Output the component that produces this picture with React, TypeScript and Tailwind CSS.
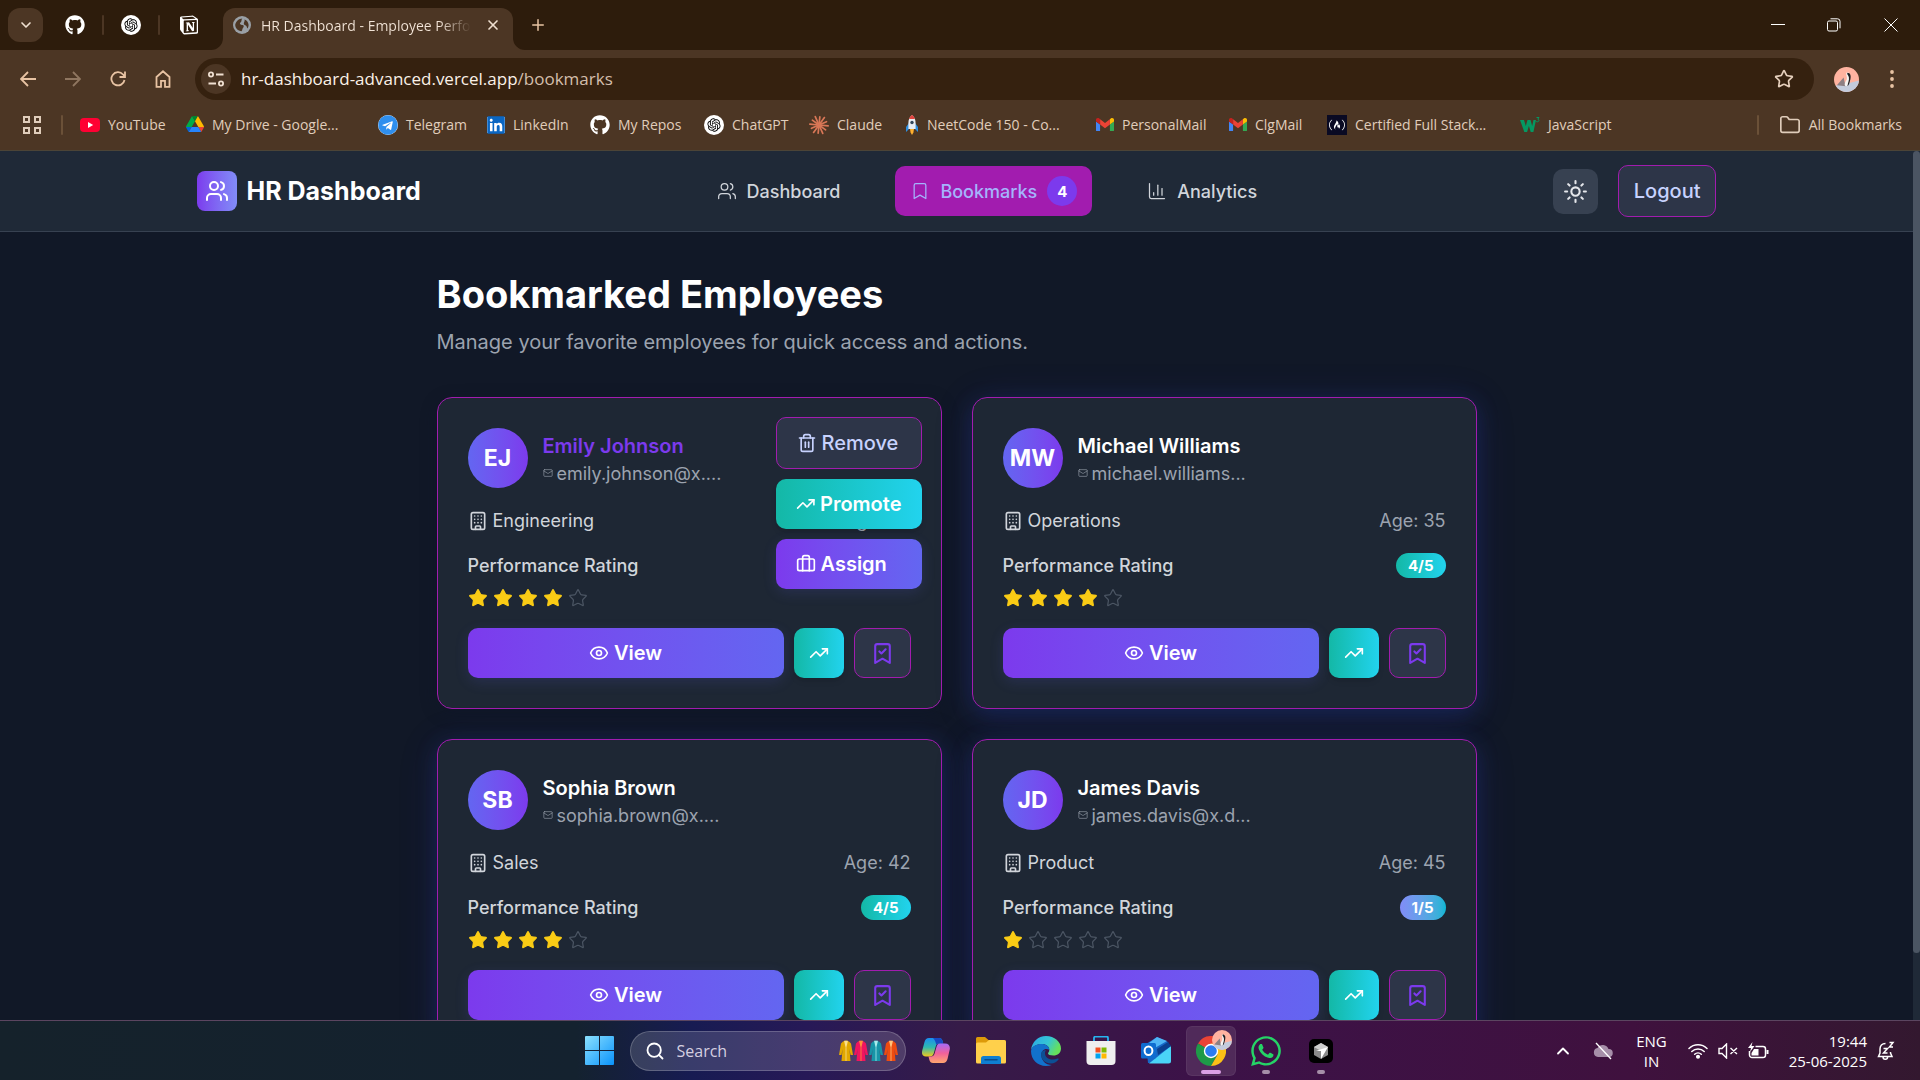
import React from "react";
import {
  Bookmark,
  BookmarkCheck,
  Briefcase,
  Building,
  ChartColumn,
  ChevronDown,
  ChevronUp,
  Eye,
  Folder,
  Mail,
  Plus,
  Search,
  Star,
  Sun,
  Trash2,
  TrendingUp,
  Users,
  X,
} from "lucide-react";
import { FaFreeCodeCamp, FaGithub, FaLinkedin, FaTelegram, FaWhatsapp } from "react-icons/fa";
import { RiNotionFill, RiOpenaiFill } from "react-icons/ri";

/* ---------- small brand drawings ---------- */

const OpenAiBadge = () => (
  <span className="flex size-5 items-center justify-center rounded-full bg-white text-black">
    <RiOpenaiFill className="size-4" />
  </span>
);

const YouTubeIcon = () => (
  <svg viewBox="0 0 20 20" className="size-5">
    <rect x="0" y="3" width="20" height="14" rx="4" fill="#ff0033" />
    <path d="M8 7l5.2 3L8 13z" fill="#fff" />
  </svg>
);

const DriveIcon = () => (
  <svg viewBox="0 0 87.3 78" className="w-[18px]">
    <path d="M6.6 66.85l3.85 6.65c.8 1.4 1.95 2.5 3.3 3.3l13.75-23.8H0c0 1.55.4 3.1 1.2 4.5z" fill="#0066da" />
    <path d="M43.65 25L29.9 1.2c-1.35.8-2.5 1.9-3.3 3.3l-25.4 44A9 9 0 0 0 0 53h27.5z" fill="#00ac47" />
    <path d="M73.55 76.8c1.35-.8 2.5-1.9 3.3-3.3l1.6-2.75L86.1 57.5c.8-1.4 1.2-2.95 1.2-4.5H59.8l5.85 11.5z" fill="#ea4335" />
    <path d="M43.65 25L57.4 1.2C56.05.4 54.5 0 52.9 0H34.4c-1.6 0-3.15.45-4.5 1.2z" fill="#00832d" />
    <path d="M59.8 53H27.5L13.75 76.8c1.35.8 2.9 1.2 4.5 1.2h50.8c1.6 0 3.15-.45 4.5-1.2z" fill="#2684fc" />
    <path d="M73.4 26.5l-12.7-22c-.8-1.4-1.95-2.5-3.3-3.3L43.65 25 59.8 53h27.45c0-1.55-.4-3.1-1.2-4.5z" fill="#ffba00" />
  </svg>
);

const GmailIcon = () => (
  <svg viewBox="52 42 88 66" className="w-[18px]">
    <path fill="#4285f4" d="M58 108h14V74L52 59v43c0 3.32 2.69 6 6 6" />
    <path fill="#34a853" d="M120 108h14c3.32 0 6-2.69 6-6V59l-20 15" />
    <path fill="#fbbc04" d="M120 48v26l20-15v-8c0-7.42-8.47-11.65-14.4-7.2" />
    <path fill="#ea4335" d="M72 74V48l24 18 24-18v26L96 92" />
    <path fill="#c5221f" d="M52 51v8l20 15V48l-5.6-4.2c-5.94-4.45-14.4-.22-14.4 7.2" />
  </svg>
);

const BURST = Array.from({ length: 12 }, (_, i) => i * 30 + 6);

const ClaudeIcon = () => (
  <svg viewBox="-10 -10 20 20" className="size-5">
    {BURST.map((angle, i) => (
      <line
        key={angle}
        x1="0"
        y1="0"
        x2="0"
        y2={i % 2 ? -9.2 : -8.2}
        transform={`rotate(${angle})`}
        stroke="#d97757"
        strokeWidth="1.7"
        strokeLinecap="round"
      />
    ))}
  </svg>
);

const RocketIcon = () => (
  <svg viewBox="0 0 14 20" className="h-5 w-[14px]">
    <path d="M4 8L1 12v5l3-3zM10 8l3 4v5l-3-3z" fill="#2f8fe0" />
    <path d="M7 0c2.6 2 3.6 5 3.6 8v6H3.4V8C3.4 5 4.4 2 7 0z" fill="#e9edf2" />
    <path d="M7 0c1.5 1.1 2.4 2.4 2.9 4H4.1C4.6 2.4 5.5 1.1 7 0z" fill="#e0443e" />
    <circle cx="7" cy="7.5" r="1.7" fill="#33475b" />
    <path d="M5 14h4l-.6 3.5L7 20l-1.4-2.5z" fill="#ffb02e" />
  </svg>
);

const W3Icon = () => (
  <svg viewBox="0 0 20 20" className="size-5">
    <path d="M0 5h4l1.8 6L7.5 5h3l1.7 6L13.5 5H16l-2.6 12h-2.7L8.900 11l-1.800 6H4.300z" fill="#059862" />
    <path d="M16.5 2.5h2.500l-1.200 1.700c1.600.2 1.500 2.600-.4 2.600-.6 0-1.100-.2-1.400-.6" fill="none" stroke="#059862" />
  </svg>
);

const ProfileIcon = ({ className }: { className: string }) => (
  <svg viewBox="0 0 26 26" className={className}>
    <defs>
      <clipPath id="profile-clip">
        <circle cx="13" cy="13" r="13" />
      </clipPath>
    </defs>
    <g clipPath="url(#profile-clip)">
      <rect width="26" height="26" fill="#ffb3a0" />
      <path d="M0 20l6-2 9-1 11-3v12H0z" fill="#c3cbdc" />
      <path d="M3 19l7-8 2 9z" fill="#8d7f83" />
      <path d="M13 6c3-1 4.500 2 3.500 6s-.5 7-4 8c-2.500-1-1-4 .5-6.500S12 8 13 6z" fill="#f7f4f2" />
      <path d="M14 6c3 0 4 3 3 7s-1.500 6-3 7c.5-4 2-6 1.500-9S13 8 14 6z" fill="#1f2023" />
    </g>
  </svg>
);

/* ---------- browser chrome ---------- */

const Divider = () => <span className="h-5 w-0.5 shrink-0 rounded-full bg-[#4c3624]" />;

const TabStrip = () => (
  <div className="flex h-[50px] items-center bg-[#2d1c0c] pl-2 text-[#efdfd0]">
    <button aria-label="Search tabs" className="flex h-[34px] w-[35px] items-center justify-center rounded-xl bg-[#4c3624]">
      <ChevronDown className="size-4" strokeWidth={2.5} />
    </button>
    <div className="ml-[22px] flex items-center gap-[17px]">
      <FaGithub className="size-5 text-white" />
      <Divider />
      <OpenAiBadge />
      <Divider />
      <RiNotionFill className="size-6 text-white" />
    </div>
    <div className="relative ml-[22px] mt-2 flex h-[42px] w-[290px] items-center rounded-t-xl bg-[#4c3624] pb-2 pl-2.5 pr-3">
      <svg viewBox="0 0 12 12" className="absolute bottom-0 -left-3 size-3">
        <path d="M12 0v12H0A12 12 0 0 0 12 0z" fill="#4c3624" />
      </svg>
      <svg viewBox="0 0 12 12" className="absolute bottom-0 -right-3 size-3">
        <path d="M0 0v12h12A12 12 0 0 1 0 0z" fill="#4c3624" />
      </svg>
      <svg viewBox="0 0 18 18" className="size-[18px] shrink-0">
        <circle cx="9" cy="9" r="9" fill="#9aa0a6" />
        <path d="M2.200 8.800C3 5 6 2.600 9.300 2.500 8 4 9 5.500 7.500 6.500S7.800 9 9.500 9s1.500 2 .5 3-.5 2.500-1.500 3.200C5 15 2.200 12.500 2.200 8.800z" fill="#4c3624" />
        <path d="M11.500 3.500c2.300.8 4 3 4.100 5.500 0 1.300-.4 2.500-1 3.500-1-.8-.6-2.500-1.900-3s-2.400-1.500-1.700-3 .8-1.500.5-3z" fill="#4c3624" />
      </svg>
      <span className="ml-2.5 flex-1 overflow-hidden whitespace-nowrap bg-linear-to-r from-[#f3e5d8] from-85% to-transparent bg-clip-text text-[14px] text-transparent">
        HR Dashboard - Employee Performance
      </span>
      <button aria-label="Close tab" className="ml-3.5 shrink-0">
        <X className="size-4" strokeWidth={2.5} />
      </button>
    </div>
    <button aria-label="New tab" className="ml-4 text-[#e8c3a3]">
      <Plus className="size-[18px]" />
    </button>
    <div className="ml-auto flex text-white">
      <button aria-label="Minimise" className="flex w-14 justify-center">
        <svg viewBox="0 0 14 14" className="size-3.5">
          <path d="M0 6.500h14" stroke="currentColor" />
        </svg>
      </button>
      <button aria-label="Restore" className="flex w-14 justify-center">
        <svg viewBox="0 0 14 14" className="size-3.5" fill="none" stroke="currentColor">
          <rect x=".5" y="3" width="10" height="10" rx="1.500" />
          <path d="M3.500 .8h7a2.500 2.500 0 0 1 2.500 2.500v7" />
        </svg>
      </button>
      <button aria-label="Close" className="flex w-[58px] justify-center">
        <svg viewBox="0 0 14 14" className="size-3.5" stroke="currentColor">
          <path d="M.5 .5l13 13M13.500 .5l-13 13" />
        </svg>
      </button>
    </div>
  </div>
);

const Toolbar = () => (
  <div className="flex h-[58px] items-center pl-2 pr-[15px] text-[#e8c3a3]">
    <div className="flex gap-[5px]">
      <button aria-label="Back" className="flex size-10 items-center justify-center">
        <svg viewBox="0 0 16 16" className="size-4" fill="none" stroke="currentColor" strokeWidth="1.8">
          <path d="M16 8H1.500M8 1L1 8l7 7" />
        </svg>
      </button>
      <button aria-label="Forward" className="flex size-10 items-center justify-center text-[#8f7660]">
        <svg viewBox="0 0 16 16" className="size-4" fill="none" stroke="currentColor" strokeWidth="1.8">
          <path d="M0 8h14.500M8 1l7 7-7 7" />
        </svg>
      </button>
      <button aria-label="Reload" className="flex size-10 items-center justify-center">
        <svg viewBox="0 0 16 16" className="size-4" fill="none" stroke="currentColor" strokeWidth="1.8">
          <path d="M14.500 9A6.600 6.600 0 1 1 13 3.500L14.500 5M15 .5V6H9.500" />
        </svg>
      </button>
      <button aria-label="Home" className="flex size-10 items-center justify-center">
        <svg viewBox="0 0 16 18" className="h-[18px] w-4" fill="none" stroke="currentColor" strokeWidth="1.8">
          <path d="M1.500 7L8 1.300 14.500 7v9.800H10v-6H6v6H1.500z" />
        </svg>
      </button>
    </div>
    <div className="ml-3 flex h-[42px] flex-1 items-center rounded-full bg-[#35210f] pl-1.5 pr-5">
      <button aria-label="Site information" className="flex size-[30px] items-center justify-center rounded-full bg-[#4c3624] text-[#f0e0d2]">
        <svg viewBox="0 0 16 16" className="size-4" fill="none" stroke="currentColor" strokeWidth="1.8">
          <circle cx="3" cy="3.500" r="2.100" />
          <path d="M8 3.500h7.500M.5 12.500H8" />
          <circle cx="13" cy="12.500" r="2.100" />
        </svg>
      </button>
      <label className="sr-only" htmlFor="address">
        Address
      </label>
      <div className="relative ml-2.5 flex-1 text-[17px]">
        <span aria-hidden className="pointer-events-none absolute inset-0 whitespace-nowrap text-[#fbf1e8]">
          hr-dashboard-advanced.vercel.app<span className="text-[#d3beab]">/bookmarks</span>
        </span>
        <input
          id="address"
          className="w-full bg-transparent text-transparent outline-none"
          defaultValue="hr-dashboard-advanced.vercel.app/bookmarks"
        />
      </div>
      <Star className="size-5 text-[#e5cfbc]" />
    </div>
    <ProfileIcon className="ml-5 size-[25px]" />
    <button aria-label="Menu" className="ml-5 flex size-[26px] items-center justify-center">
      <svg viewBox="0 0 4 18" className="h-[18px] w-1" fill="currentColor">
        <circle cx="2" cy="2" r="1.900" />
        <circle cx="2" cy="9" r="1.900" />
        <circle cx="2" cy="16" r="1.900" />
      </svg>
    </button>
  </div>
);

const BOOKMARKS: { label: string; icon: React.ReactNode; width: string }[] = [
  { label: "YouTube", icon: <YouTubeIcon />, width: "w-[106px]" },
  { label: "My Drive - Google...", icon: <DriveIcon />, width: "w-[192px]" },
  {
    label: "Telegram",
    icon: (
      <span className="flex size-5 rounded-full bg-white">
        <FaTelegram className="size-5 text-[#2f8fee]" />
      </span>
    ),
    width: "w-[109px]",
  },
  {
    label: "LinkedIn",
    icon: (
      <span className="flex h-4 w-[18px] items-center justify-center bg-white">
        <FaLinkedin className="size-5 shrink-0 text-[#0a66c2]" />
      </span>
    ),
    width: "w-[103px]",
  },
  { label: "My Repos", icon: <FaGithub className="size-5 text-white" />, width: "w-[114px]" },
  { label: "ChatGPT", icon: <OpenAiBadge />, width: "w-[105px]" },
  { label: "Claude", icon: <ClaudeIcon />, width: "w-[96px]" },
  { label: "NeetCode 150 - Co...", icon: <RocketIcon />, width: "w-[191px]" },
  { label: "PersonalMail", icon: <GmailIcon />, width: "w-[133px]" },
  { label: "ClgMail", icon: <GmailIcon />, width: "w-[98px]" },
  {
    label: "Certified Full Stack...",
    icon: (
      <span className="flex size-5 items-center justify-center bg-[#0a0a23] text-white">
        <FaFreeCodeCamp className="size-4" />
      </span>
    ),
    width: "w-[193px]",
  },
  { label: "JavaScript", icon: <W3Icon />, width: "w-[110px]" },
];

const BookmarkBar = () => (
  <div className="flex h-[42px] items-center pb-[9px] pl-[23px] pr-[18px] text-[14px] text-[#e0cdbb]">
    <button aria-label="Apps" className="grid grid-cols-2 gap-1">
      <span className="size-[7px] border-2 border-current" />
      <span className="size-[7px] border-2 border-current" />
      <span className="size-[7px] border-2 border-current" />
      <span className="size-[7px] border-2 border-current" />
    </button>
    <span className="ml-5 mr-[17px] h-5 w-0.5 rounded-full bg-[#6b5138]" />
    {BOOKMARKS.map((item) => (
      <a key={item.label} href="#" className={`flex shrink-0 items-center gap-2 whitespace-nowrap ${item.width}`}>
        {item.icon}
        {item.label}
      </a>
    ))}
    <span className="ml-auto mr-5 h-5 w-0.5 rounded-full bg-[#6b5138]" />
    <button className="flex items-center gap-2 whitespace-nowrap">
      <Folder className="size-[22px]" strokeWidth={1.8} />
      All Bookmarks
    </button>
  </div>
);

/* ---------- HR dashboard ---------- */

const NavBar = () => (
  <header className="border-b border-[#374151] bg-[#1f2937]">
    <div className="mx-auto flex h-20 max-w-[1600px] items-center justify-between px-10">
      <a href="#" className="flex items-center gap-2.5 text-[25px] leading-[40px] font-bold text-white">
        <span className="flex size-10 items-center justify-center rounded-lg bg-linear-to-r from-[#7c3aed] to-[#818cf8]">
          <Users className="size-6" strokeWidth={2} />
        </span>
        <span className="whitespace-nowrap">HR Dashboard</span>
      </a>
      <nav className="flex items-center gap-10 text-[18px] leading-[25px] font-medium text-[#d1d5db]">
        <a href="#" className="flex h-[50px] items-center gap-2.5 rounded-[10px] px-[15px]">
          <Users className="size-5" strokeWidth={1.5} />
          Dashboard
        </a>
        <a href="#" className="flex h-[50px] items-center gap-2.5 rounded-[10px] bg-[#a21caf] px-[15px] text-[#a5b4fc]">
          <Bookmark className="size-5" strokeWidth={1.5} />
          Bookmarks
          <span className="flex size-[30px] items-center justify-center rounded-full bg-[#7c3aed] text-[15px] font-bold text-white">4</span>
        </a>
        <a href="#" className="flex h-[50px] items-center gap-2.5 rounded-[10px] px-[15px]">
          <ChartColumn className="size-5" strokeWidth={1.5} />
          Analytics
        </a>
      </nav>
      <div className="flex items-center gap-5">
        <button aria-label="Toggle theme" className="flex size-[45px] items-center justify-center rounded-[10px] bg-[#374151] text-[#e5e7eb]">
          <Sun className="size-[25px]" strokeWidth={2} />
        </button>
        <button className="flex h-[52px] items-center rounded-[10px] border border-[#a21caf] bg-[#2d3548] px-[15px] text-[20px] font-medium text-[#c7d2fe]">
          Logout
        </button>
      </div>
    </div>
  </header>
);

type Employee = {
  name: string;
  initials: string;
  email: string;
  department: string;
  age: number;
  rating: number;
  active?: boolean;
};

const EMPLOYEES: Employee[] = [
  { name: "Emily Johnson", initials: "EJ", email: "emily.johnson@x....", department: "Engineering", age: 28, rating: 4, active: true },
  { name: "Michael Williams", initials: "MW", email: "michael.williams...", department: "Operations", age: 35, rating: 4 },
  { name: "Sophia Brown", initials: "SB", email: "sophia.brown@x....", department: "Sales", age: 42, rating: 4 },
  { name: "James Davis", initials: "JD", email: "james.davis@x.d...", department: "Product", age: 45, rating: 1 },
];

const QuickActions = () => (
  <div className="absolute right-[19px] top-[19px] flex w-[146px] flex-col gap-2.5 text-[20px] font-semibold text-white">
    <button className="flex h-[52px] items-center gap-[5px] rounded-[10px] border border-[#a21caf] bg-[#2d3548] px-5 font-medium text-[#c7d2fe]">
      <Trash2 className="size-5" />
      Remove
    </button>
    <button className="flex h-[50px] items-center gap-[5px] rounded-[10px] bg-linear-to-r from-[#14b8a6] to-[#22d3ee] px-5 shadow-md">
      <TrendingUp className="size-5" />
      Promote
    </button>
    <button className="flex h-[50px] items-center gap-[5px] rounded-[10px] bg-linear-to-r from-[#7c3aed] to-[#6366f1] px-5 shadow-[0_4px_14px_rgba(99,102,241,0.15)]">
      <Briefcase className="size-5" />
      Assign
    </button>
  </div>
);

const EmployeeCard = ({ employee }: { employee: Employee }) => (
  <article
    className={`relative rounded-[15px] border border-[#a21caf] bg-[#1e2734] p-[30px] ${
      employee.active
        ? "shadow-[0_4px_16px_rgba(15,23,42,0.4)]"
        : "shadow-[0_5px_20px_rgba(30,58,138,0.35),0_5px_40px_rgba(67,56,202,0.15)]"
    }`}
  >
    <div className="flex items-center gap-[15px]">
      <span className="flex size-[60px] items-center justify-center rounded-full bg-linear-to-r from-[#6366f1] to-[#7c3aed] text-[23px] font-bold text-white">
        {employee.initials}
      </span>
      <div>
        <h2 className={`text-[20px] leading-[30px] font-semibold ${employee.active ? "text-[#7c3aed]" : "text-white"}`}>{employee.name}</h2>
        <p className="flex items-center gap-1 text-[18px] leading-[25px] text-[#9ca3af]">
          <Mail className="size-2.5" strokeWidth={1.5} />
          {employee.email}
        </p>
      </div>
    </div>
    <div className="mt-5 flex items-center justify-between text-[18px] leading-[25px]">
      <span className="flex items-center gap-[5px] text-[#d1d5db]">
        <Building className="size-5" />
        {employee.department}
      </span>
      <span className="text-[#9ca3af]">Age: {employee.age}</span>
    </div>
    <div className="mt-5 flex items-center justify-between">
      <span className="text-[18px] leading-[25px] font-medium text-[#d1d5db]">Performance Rating</span>
      <span
        className={`rounded-full bg-linear-to-r px-3 text-[15px] leading-[25px] font-bold text-white ${
          employee.rating > 2 ? "from-[#14b8a6] to-[#22d3ee]" : "from-[#818cf8] to-[#06b6d4]"
        }`}
      >
        {employee.rating}/5
      </span>
    </div>
    <div className="mt-2.5 flex gap-[5px]" role="img" aria-label={`${employee.rating} of 5 stars`}>
      {[1, 2, 3, 4, 5].map((n) => (
        <Star
          key={n}
          className={n <= employee.rating ? "size-5 fill-[#facc15] text-[#facc15]" : "size-5 text-[#4b5563]"}
          strokeWidth={1.5}
        />
      ))}
    </div>
    <div className="mt-5 flex h-[50px] gap-2.5">
      <button className="flex flex-1 items-center justify-center gap-[5px] rounded-[10px] bg-linear-to-r from-[#7c3aed] to-[#6366f1] text-[20px] font-semibold text-white shadow-[0_4px_14px_rgba(99,102,241,0.15)]">
        <Eye className="size-5" />
        View
      </button>
      <button aria-label="Promote" className="flex w-[50px] items-center justify-center rounded-[10px] bg-linear-to-r from-[#14b8a6] to-[#22d3ee] text-white shadow-md">
        <TrendingUp className="size-5" />
      </button>
      <button aria-label="Remove bookmark" className="flex w-[57px] items-center justify-center rounded-[10px] border border-[#a21caf] bg-[#2d3548] text-[#7c3aed]">
        <BookmarkCheck className="size-[25px]" />
      </button>
    </div>
    {employee.active && <QuickActions />}
  </article>
);

const Dashboard = () => (
  <div className="flex min-h-0 flex-1 border-t border-[#4b4437] bg-[#111827] font-['Inter',sans-serif]">
    <div className="min-w-0 flex-1 overflow-hidden">
      <NavBar />
      <main className="mx-auto max-w-[1120px] p-10">
        <h1 className="text-[38px] leading-[45px] font-bold text-white">Bookmarked Employees</h1>
        <p className="mt-2.5 text-[20px] leading-[30px] text-[#9ca3af]">Manage your favorite employees for quick access and actions.</p>
        <div className="mt-10 grid grid-cols-2 gap-[30px]">
          {EMPLOYEES.map((employee) => (
            <EmployeeCard key={employee.name} employee={employee} />
          ))}
        </div>
      </main>
    </div>
    <div className="w-[7px] bg-[#1f2937]">
      <div className="h-[802px] rounded-full bg-[#4b5563]" />
    </div>
  </div>
);

/* ---------- desktop taskbar ---------- */

const WindowsIcon = () => (
  <svg viewBox="0 0 29 29" className="size-[29px]">
    <defs>
      <linearGradient id="win" x1="0" y1="0" x2="1" y2="1">
        <stop offset="0" stopColor="#8be0ff" />
        <stop offset="1" stopColor="#0a93fb" />
      </linearGradient>
    </defs>
    <path d="M0 1a1 1 0 0 1 1-1h13v14H0zM15 0h13a1 1 0 0 1 1 1v13H15zM0 15h14v14H1a1 1 0 0 1-1-1zM15 15h14v13a1 1 0 0 1-1 1H15z" fill="url(#win)" />
  </svg>
);

const KURTAS = [
  { body: "#e2a800", trim: "#fbe08a" },
  { body: "#f0145f", trim: "#ff8f3a" },
  { body: "#1795a8", trim: "#a9ecec" },
  { body: "#ee4b10", trim: "#ffc37a" },
];

const KurtasIcon = () => (
  <svg viewBox="0 0 60 22" className="h-[22px] w-[60px] shrink-0">
    {KURTAS.map((k, i) => (
      <g key={k.body} transform={`translate(${i * 15} 0)`}>
        <path d="M4 1.500L7 .5l3 1 2 2L14 15h-2.500L10.500 9l1 12H2.500l1-12-1 6H0L2 3.500z" fill={k.body} />
        <path d="M5 .8h4L7.600 6.500h-1.200z" fill={k.trim} />
        <path d="M7 6v15" stroke={k.trim} strokeWidth=".8" />
      </g>
    ))}
  </svg>
);

const CopilotIcon = () => (
  <svg viewBox="0 0 28 25" className="w-7">
    <defs>
      <linearGradient id="cp1" x1="0" y1="0" x2="0" y2="1">
        <stop offset="0" stopColor="#1a8ef0" />
        <stop offset=".5" stopColor="#2fb9b0" />
        <stop offset="1" stopColor="#f2c91b" />
      </linearGradient>
      <linearGradient id="cp2" x1="0" y1="0" x2="0" y2="1">
        <stop offset="0" stopColor="#a56af8" />
        <stop offset=".5" stopColor="#f0609a" />
        <stop offset="1" stopColor="#ffa66e" />
      </linearGradient>
    </defs>
    <path d="M7 0h10c2 0 3 1.200 3.600 3l.7 2.500H17c-2 0-2.700 1-3.300 3l-2 7c-.7 2-1.700 3-3.700 3H4c-4 0-4.700-3-3.500-7L2.500 4C3.300 1.500 4.500 0 7 0z" fill="url(#cp1)" />
    <path d="M13 0h4c2 0 3 1.200 3.600 3l.7 2.500H17c-1.400 0-2.200.5-2.700 1.500C13.500 4 13 2 11 .1z" fill="#1749c4" />
    <path d="M21 25H11c-2 0-3-1.200-3.600-3l-.9-3.500H9c2 0 3-1 3.600-3l2-7c.7-2 1.400-3 3.400-3h5c4 0 5.700 3 4.500 7L25.500 21c-.8 2.500-2 4-4.500 4z" fill="url(#cp2)" />
  </svg>
);

const ExplorerIcon = () => (
  <svg viewBox="0 0 30 27" className="w-[30px]">
    <path d="M0 1.500A1.500 1.500 0 0 1 1.500 0H9l3.500 3H28a2 2 0 0 1 2 2v4H0z" fill="#dd9a09" />
    <path d="M0 7a1.500 1.500 0 0 1 1.500-1.500H10L13 3h15a2 2 0 0 1 2 2v20a1.500 1.500 0 0 1-1.500 1.500h-27A1.500 1.500 0 0 1 0 25z" fill="#ffd04b" />
    <path d="M5 27v-5.500a2.500 2.500 0 0 1 2.500-2.500h15a2.500 2.500 0 0 1 2.500 2.500V27z" fill="#0f7fd1" />
    <path d="M9 22.800h12" stroke="#0a4d8c" strokeWidth="1.5" strokeLinecap="round" />
  </svg>
);

const EdgeIcon = () => (
  <svg viewBox="0 0 30 30" className="size-[30px]">
    <defs>
      <linearGradient id="edge-top" x1="0" y1="0" x2="1" y2=".4">
        <stop offset="0" stopColor="#2aa7e8" />
        <stop offset=".6" stopColor="#35c6d4" />
        <stop offset="1" stopColor="#66e05c" />
      </linearGradient>
    </defs>
    <path d="M0 14C1 6 7 0 15 0c8.500 0 15 6 15 12.500 0 4.500-3.500 7-7.500 7-3.500 0-5.500-1-5.500-2 0-.8 1.300-1.300 1.300-3.700C18.300 10.500 15 8 11 8 5.500 8 1.500 10.500 0 14z" fill="url(#edge-top)" />
    <path d="M0 15c.5-4.500 5.500-7 10.500-7 4.500 0 7.800 2.500 7.800 5.800-4-2.500-8 .5-8 5.200 0 5 4 10 10.500 10-1.800.7-3.700 1-5.800 1C6.500 30 0 23.500 0 15z" fill="#1272cc" />
    <path d="M10.500 16c-2 6 3 11.500 9.500 11.500 3 0 5.500-1.500 7.500-4 .5-.7-.2-1.300-1-1-5.500 2.500-13 .5-12.500-6 .2-1.200.5-1.700 1-2.300-2 0-3.900.6-4.500 1.800z" fill="#0c4f94" />
  </svg>
);

const StoreIcon = () => (
  <svg viewBox="0 0 30 29" className="w-[30px]">
    <path d="M8 6V2a1.500 1.500 0 0 1 1.500-1.500h11A1.500 1.500 0 0 1 22 2v4" fill="none" stroke="#27b3ee" strokeWidth="1.8" />
    <path d="M.5 5h29v20a4 4 0 0 1-4 4h-21a4 4 0 0 1-4-4z" fill="#efefef" />
    <path d="M9.500 11.500h5v5h-5z" fill="#f25022" />
    <path d="M15.500 11.500h5v5h-5z" fill="#7fba00" />
    <path d="M9.500 17.500h5v5h-5z" fill="#00a4ef" />
    <path d="M15.500 17.500h5v5h-5z" fill="#ffb900" />
  </svg>
);

const OutlookIcon = () => (
  <svg viewBox="0 0 30 27" className="w-[30px]">
    <path d="M5 7l11-7 11 5 2 6v13a2 2 0 0 1-2 2H7z" fill="#1668c7" />
    <path d="M8 6l8-6 10 4-14 8z" fill="#4fb5f5" />
    <path d="M30 9v15a2.500 2.500 0 0 1-2.500 2.500H8z" fill="#4ad4f7" />
    <path d="M16 12L27 5l3 4-13 9z" fill="#0a3f8f" />
    <rect x="0" y="6" width="15" height="15.500" rx="1.500" fill="#0f6cd0" />
    <ellipse cx="7.500" cy="13.700" rx="3.900" ry="4.300" fill="none" stroke="#fff" strokeWidth="2" />
  </svg>
);

const ChromeIcon = () => (
  <svg viewBox="0 0 30 30" className="size-[30px]">
    <path d="M15 15L2 7.500A15 15 0 0 1 28 7.500z" fill="#ea4335" />
    <path d="M15 15L2 7.500A15 15 0 0 0 15 30l6.500-11.500z" fill="#1e9a48" />
    <path d="M15 7.500h13A15 15 0 0 1 15 30l6.500-11.300z" fill="#fbc116" />
    <circle cx="15" cy="15" r="7.200" fill="#fff" />
    <circle cx="15" cy="15" r="5.800" fill="#2b7cf0" />
  </svg>
);

const CursorIcon = () => (
  <svg viewBox="0 0 24 24" className="size-6">
    <rect width="24" height="24" rx="5" fill="#000" />
    <path d="M12 4l7 4v8l-7 4-7-4V8z" fill="#8b8b8b" />
    <path d="M12 4l7 4-7 4-7-4z" fill="#cfcfcf" />
    <path d="M19 8l-7 12v-8H7z" fill="#fff" />
  </svg>
);

const TaskSlot = ({ label, state, children }: { label: string; state?: "active" | "open"; children: React.ReactNode }) => (
  <button
    aria-label={label}
    className={`relative flex size-[50px] items-center justify-center rounded-md ${
      state === "active" ? "bg-white/10 ring-1 ring-inset ring-white/5" : ""
    }`}
  >
    {children}
    {state === "active" && <span className="absolute bottom-0.5 h-1 w-5 rounded-full bg-[#dba0e6]" />}
    {state === "open" && <span className="absolute bottom-0.5 h-1 w-2 rounded-full bg-[#a68fa9]" />}
  </button>
);

const Taskbar = () => (
  <footer className="grid h-[60px] shrink-0 grid-cols-[1fr_auto_1fr] items-center border-t border-[#5b4560] bg-[linear-gradient(90deg,#15222b_0%,#14222f_30%,#171b52_36%,#271957_42%,#361b48_50%,#3c1248_62%,#3f113e_85%,#33182f_100%)]">
    <span />
    <div className="flex items-center gap-[5px]">
      <TaskSlot label="Start">
        <WindowsIcon />
      </TaskSlot>
      <label className="flex h-10 w-[276px] items-center rounded-full border border-white/20 bg-white/15 pl-3.5 pr-1.5 text-white">
        <Search className="size-5 shrink-0" strokeWidth={2.2} />
        <span className="sr-only">Search</span>
        <input placeholder="Search" className="ml-3 h-8 w-0 flex-1 bg-transparent text-[16px] text-white outline-none placeholder:text-[#d5cfe0]" />
        <KurtasIcon />
      </label>
      <TaskSlot label="Copilot">
        <CopilotIcon />
      </TaskSlot>
      <TaskSlot label="File Explorer">
        <ExplorerIcon />
      </TaskSlot>
      <TaskSlot label="Edge">
        <EdgeIcon />
      </TaskSlot>
      <TaskSlot label="Store">
        <StoreIcon />
      </TaskSlot>
      <TaskSlot label="Outlook">
        <OutlookIcon />
      </TaskSlot>
      <TaskSlot label="Chrome" state="active">
        <ChromeIcon />
        <ProfileIcon className="absolute right-1 top-1 size-5" />
      </TaskSlot>
      <TaskSlot label="WhatsApp" state="open">
        <FaWhatsapp className="size-[34px] text-[#25d366]" />
      </TaskSlot>
      <TaskSlot label="Cursor" state="open">
        <CursorIcon />
      </TaskSlot>
    </div>
    <div className="flex items-center justify-end pr-[25px] text-[15px] leading-5 text-white">
      <ChevronUp className="size-5" strokeWidth={2.2} />
      <svg viewBox="0 0 20 18" className="ml-5 w-5">
        <path d="M5 15a4.500 4.500 0 0 1-.5-8.900A6 6 0 0 1 15.500 7 4 4 0 0 1 16 15z" fill="#a68fa9" />
        <path d="M3 1l15 16" stroke="#fff" strokeWidth="1.3" />
      </svg>
      <span className="ml-[23px] text-center">
        ENG
        <br />
        IN
      </span>
      <svg viewBox="0 0 20 16" className="ml-[21px] w-5" fill="none" stroke="currentColor" strokeWidth="1.5" strokeLinecap="round">
        <path d="M1 5.500a12.800 12.800 0 0 1 18 0M3.800 8.500a8.800 8.800 0 0 1 12.400 0M6.700 11.300a4.800 4.800 0 0 1 6.600 0" />
        <circle cx="10" cy="13.700" r="1.300" fill="currentColor" />
      </svg>
      <svg viewBox="0 0 20 16" className="ml-2.5 w-5" fill="none" stroke="currentColor" strokeWidth="1.4">
        <path d="M1 5.500v5h3L8.500 15V1L4 5.500zM12.500 5l6.500 6M19 5l-6.500 6" />
      </svg>
      <svg viewBox="0 0 21 18" className="ml-2.5 w-[21px]" fill="none" stroke="currentColor" strokeWidth="1.5">
        <path d="M7.500 4.500H15a2.500 2.500 0 0 1 2.500 2.500v6a2.500 2.500 0 0 1-2.500 2.500H4A2.500 2.500 0 0 1 1.500 13V9" />
        <path d="M19.500 8v4" strokeWidth="2" />
        <path d="M6 7h4.500v6.500H3.500V11z" fill="currentColor" stroke="none" />
        <path d="M4.500 0L0 6h3L2 10l4.500-6h-3z" fill="currentColor" stroke="none" />
      </svg>
      <span className="ml-5 text-right">
        19:44
        <br />
        25-06-2025
      </span>
      <svg viewBox="0 0 18 20" className="ml-2.5 w-[18px]" fill="none" stroke="currentColor" strokeWidth="1.5">
        <path d="M8.500 2.500C5 2.500 3 5 3 8v4l-1.500 3.500H15L13.500 12v-1M6 16a2.300 2.300 0 0 0 4.600 0" />
        <path d="M6.500 7.500h4l-4 4.500h4M12.500 1.500H16l-3.500 4.500H16" />
      </svg>
    </div>
  </footer>
);

export default function App() {
  return (
    <div className="flex h-screen flex-col overflow-hidden bg-[#111827] font-['Open_Sans','Noto_Sans',sans-serif]">
      <div className="shrink-0 bg-[#4c3624]">
        <TabStrip />
        <Toolbar />
        <BookmarkBar />
      </div>
      <Dashboard />
      <Taskbar />
    </div>
  );
}
